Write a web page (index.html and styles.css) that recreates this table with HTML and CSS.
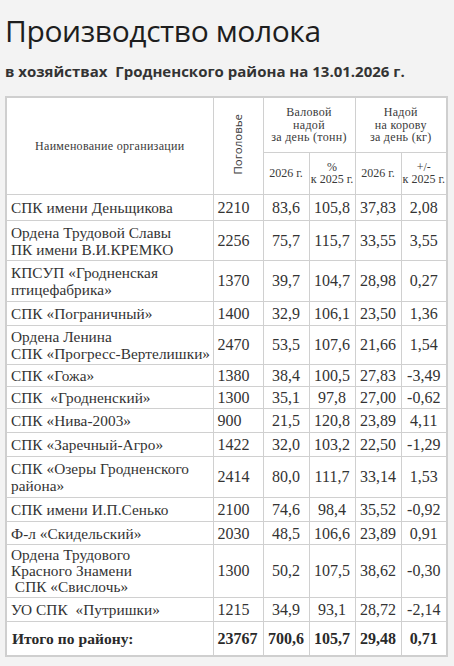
FILE: index.html
```html
<!DOCTYPE html>
<html lang="ru">
<head>
<meta charset="utf-8">
<title>Производство молока</title>
<link rel="stylesheet" href="styles.css">
</head>
<body>
<div class="page">
  <h1 class="title">Производство молока</h1>
  <p class="subtitle">в хозяйствах&nbsp; Гродненского района на 13.01.2026 г.</p>
  <table class="milk">
    <colgroup>
      <col class="c-name"><col class="c-head"><col class="c-n"><col class="c-n"><col class="c-n"><col class="c-n">
    </colgroup>
    <thead>
      <tr class="h1">
        <th rowspan="2" class="th-name">Наименование организации</th>
        <th rowspan="2" class="th-vert"><span>Поголовье</span></th>
        <th colspan="2">Валовой<br>надой<br>за день (тонн)</th>
        <th colspan="2">Надой<br>на корову<br>за день (кг)</th>
      </tr>
      <tr class="h2">
        <th>2026 г.</th>
        <th>%<br>к 2025 г.</th>
        <th>2026 г.</th>
        <th>+/-<br>к 2025 г.</th>
      </tr>
    </thead>
    <tbody>
      <tr class="r1"><td>СПК имени Деньщикова</td><td>2210</td><td>83,6</td><td>105,8</td><td>37,83</td><td>2,08</td></tr>
      <tr class="r2"><td>Ордена Трудовой Славы<br>ПК имени В.И.КРЕМКО</td><td>2256</td><td>75,7</td><td>115,7</td><td>33,55</td><td>3,55</td></tr>
      <tr><td>КПСУП «Гродненская<br>птицефабрика»</td><td>1370</td><td>39,7</td><td>104,7</td><td>28,98</td><td>0,27</td></tr>
      <tr><td>СПК «Пограничный»</td><td>1400</td><td>32,9</td><td>106,1</td><td>23,50</td><td>1,36</td></tr>
      <tr class="r5"><td>Ордена Ленина<br>СПК «Прогресс-Вертелишки»</td><td>2470</td><td>53,5</td><td>107,6</td><td>21,66</td><td>1,54</td></tr>
      <tr class="tight"><td>СПК «Гожа»</td><td>1380</td><td>38,4</td><td>100,5</td><td>27,83</td><td>-3,49</td></tr>
      <tr class="tight"><td>СПК&nbsp; «Гродненский»</td><td>1300</td><td>35,1</td><td>97,8</td><td>27,00</td><td>-0,62</td></tr>
      <tr><td>СПК «Нива-2003»</td><td>900</td><td>21,5</td><td>120,8</td><td>23,89</td><td>4,11</td></tr>
      <tr><td>СПК «Заречный-Агро»</td><td>1422</td><td>32,0</td><td>103,2</td><td>22,50</td><td>-1,29</td></tr>
      <tr><td>СПК «Озеры Гродненского<br>района»</td><td>2414</td><td>80,0</td><td>111,7</td><td>33,14</td><td>1,53</td></tr>
      <tr><td>СПК имени И.П.Сенько</td><td>2100</td><td>74,6</td><td>98,4</td><td>35,52</td><td>-0,92</td></tr>
      <tr class="r12"><td>Ф-л «Скидельский»</td><td>2030</td><td>48,5</td><td>106,6</td><td>23,89</td><td>0,91</td></tr>
      <tr class="three"><td>Ордена Трудового<br>Красного Знамени<br>&nbsp;СПК «Свислочь»</td><td>1300</td><td>50,2</td><td>107,5</td><td>38,62</td><td>-0,30</td></tr>
      <tr><td>УО СПК&nbsp; «Путришки»</td><td>1215</td><td>34,9</td><td>93,1</td><td>28,72</td><td>-2,14</td></tr>
      <tr class="total"><td>Итого по району:</td><td>23767</td><td>700,6</td><td>105,7</td><td>29,48</td><td>0,71</td></tr>
    </tbody>
  </table>
</div>
</body>
</html>
```

FILE: styles.css
```css
html, body {
  margin: 0;
  padding: 0;
  background: #f3f3f3;
}

.page {
  padding: 0 5px;
  color: #222;
}

.title {
  margin: 0;
  padding-top: 11px;
  font-family: "Open Sans", "Noto Sans", sans-serif;
  font-weight: 400;
  font-size: 30px;
  line-height: 40px;
  letter-spacing: -0.4px;
  color: #1e1e1e;
}

.subtitle {
  margin: 10px 0 0;
  font-family: "Open Sans", "Noto Sans", sans-serif;
  font-weight: 700;
  font-size: 15px;
  line-height: 20px;
  color: #333;
}

.milk {
  margin-top: 15px;
  width: 443px;
  table-layout: fixed;
  border-collapse: collapse;
  background: #fff;
  border: 2px solid #cfcfcf;
  font-family: "Liberation Serif", "DejaVu Serif", serif;
  color: #333;
}

.c-name { width: 207px; }
.c-head { width: 50px; }
.c-n { width: 46px; }

.milk th,
.milk td {
  border: 1px solid #d0d0d0;
}

.milk th {
  font-weight: 400;
  font-size: 12px;
  line-height: 12.5px;
  letter-spacing: 0.3px;
  color: #3a3a3a;
  text-align: center;
  vertical-align: middle;
  padding: 1px 0;
  white-space: nowrap;
}

.h2 th {
  letter-spacing: 0;
}

.h1 { height: 55px; }
.h2 { height: 42px; }

.th-name {
  letter-spacing: 0.7px;
}

.th-vert span {
  display: inline-block;
  writing-mode: vertical-rl;
  transform: rotate(180deg);
  font-family: "Open Sans", "Noto Sans", sans-serif;
  font-size: 11.5px;
  line-height: 12px;
  letter-spacing: 0;
  color: #3a3a3a;
}

.milk td {
  font-size: 16px;
  line-height: 17px;
  padding: 3px 1px;
  text-align: center;
  vertical-align: middle;
  white-space: nowrap;
}

.milk td:first-child {
  font-size: 15.3px;
  text-align: left;
  padding-left: 4px;
  letter-spacing: 0.05px;
}

.milk td:nth-child(2) {
  text-align: left;
  padding-left: 4px;
}

.r1 td { padding-top: 4px; padding-bottom: 4px; }
.r2 td { padding-top: 3px; padding-bottom: 2px; }
.r5 td { padding-top: 2px; padding-bottom: 2px; }
.tight td { padding-top: 2px; padding-bottom: 2px; }
.r12 td { padding-top: 3px; padding-bottom: 2px; }
.milk .three td { line-height: 16px; padding-top: 2px; padding-bottom: 2px; }

.milk .total td {
  font-weight: 700;
  font-size: 16px;
  height: 27px;
  color: #2a2a2a;
}

.milk .total td:first-child {
  font-size: 15.5px;
  padding-left: 5px;
}
```
